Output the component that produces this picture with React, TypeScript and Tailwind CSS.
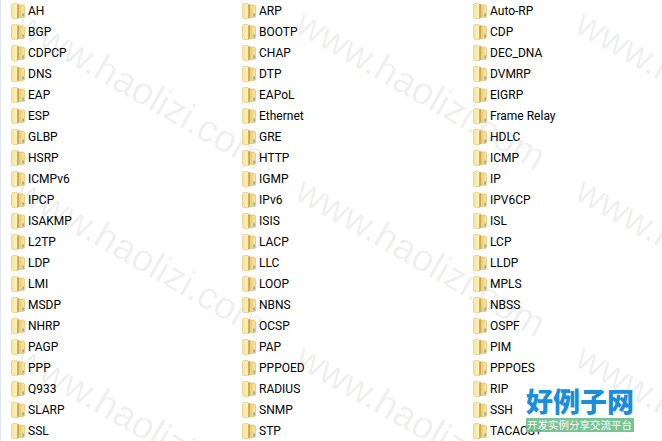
const cols = [
  ["AH","BGP","CDPCP","DNS","EAP","ESP","GLBP","HSRP","ICMPv6","IPCP","ISAKMP","L2TP","LDP","LMI","MSDP","NHRP","PAGP","PPP","Q933","SLARP","SSL"],
  ["ARP","BOOTP","CHAP","DTP","EAPoL","Ethernet","GRE","HTTP","IGMP","IPv6","ISIS","LACP","LLC","LOOP","NBNS","OCSP","PAP","PPPOED","RADIUS","SNMP","STP"],
  ["Auto-RP","CDP","DEC_DNA","DVMRP","EIGRP","Frame Relay","HDLC","ICMP","IP","IPV6CP","ISL","LCP","LLDP","MPLS","NBSS","OSPF","PIM","PPPOES","RIP","SSH","TACACS+"],
];
const marks: number[][] = [];
for (const y of [3, 170, 337]) for (const x of [28, 308, 588]) marks.push([x, y]);

function Folder() {
  return (
    <svg width="14" height="16" viewBox="0 0 14 16" className="shrink-0">
      <defs>
        <linearGradient id="fb" x1="0" y1="0" x2="1" y2="0">
          <stop offset="0" stopColor="#f6e39c" />
          <stop offset="1" stopColor="#fdf3c4" />
        </linearGradient>
        <linearGradient id="fr" x1="0" y1="0" x2="1" y2="0">
          <stop offset="0" stopColor="#e8c66a" />
          <stop offset="1" stopColor="#f9e8a8" />
        </linearGradient>
      </defs>
      <path d="M0.5 1.5 L1.5 0.5 H6 L7 1.5 V15.5 H1.5 L0.5 14.5 Z" fill="url(#fb)" stroke="#e0c478" strokeWidth="0.6" />
      <path d="M7 2 H12.5 L13.5 3 V14 L12.5 14.5 H7 Z" fill="url(#fr)" stroke="#d8b864" strokeWidth="0.6" />
      <path d="M6 1.5 L8 0.8 V14.5 L6 15.5 Z" fill="#c9a044" opacity="0.75" />
      <rect x="11.5" y="10.5" width="1.2" height="3" fill="#4a9fd8" />
    </svg>
  );
}

export default function App() {
  return (
    <div className="relative w-[662px] h-[441px] overflow-hidden bg-white border-l border-[#dde7f0] font-['Roboto','Noto_Sans',sans-serif] text-[12px] text-black">
      {marks.map(([x, y], i) => (
        <div
          key={i}
          style={{ left: x, top: y }}
          className="absolute rotate-[30deg] origin-top-left whitespace-nowrap font-['Liberation_Sans',sans-serif] text-[38px] leading-none text-[#000]/[0.07] pointer-events-none"
        >
          www.haolizi.com
        </div>
      ))}
      <div className="relative flex">
        {cols.map((c, i) => (
          <div key={i} className={i === 2 ? "w-[199px] pl-[10px]" : "w-[231px] pl-[10px]"}>
            {c.map((t) => (
              <div key={t} className="flex items-center h-[21px] gap-[3px]">
                <Folder />
                <span>{t}</span>
              </div>
            ))}
          </div>
        ))}
      </div>
      <div className="absolute left-[525px] top-[385px] w-[108px] font-['Noto_Sans_CJK_SC',sans-serif]">
        <div className="text-[27px] leading-[31px] font-black text-[#1a8ed6] whitespace-nowrap">好例子网</div>
        <div className="h-[14px] mt-[2px] bg-[#6dbb8a]/90 text-white text-[10.5px] leading-[14px] pl-[1px] whitespace-nowrap">开发实例分享交流平台</div>
      </div>
    </div>
  );
}
